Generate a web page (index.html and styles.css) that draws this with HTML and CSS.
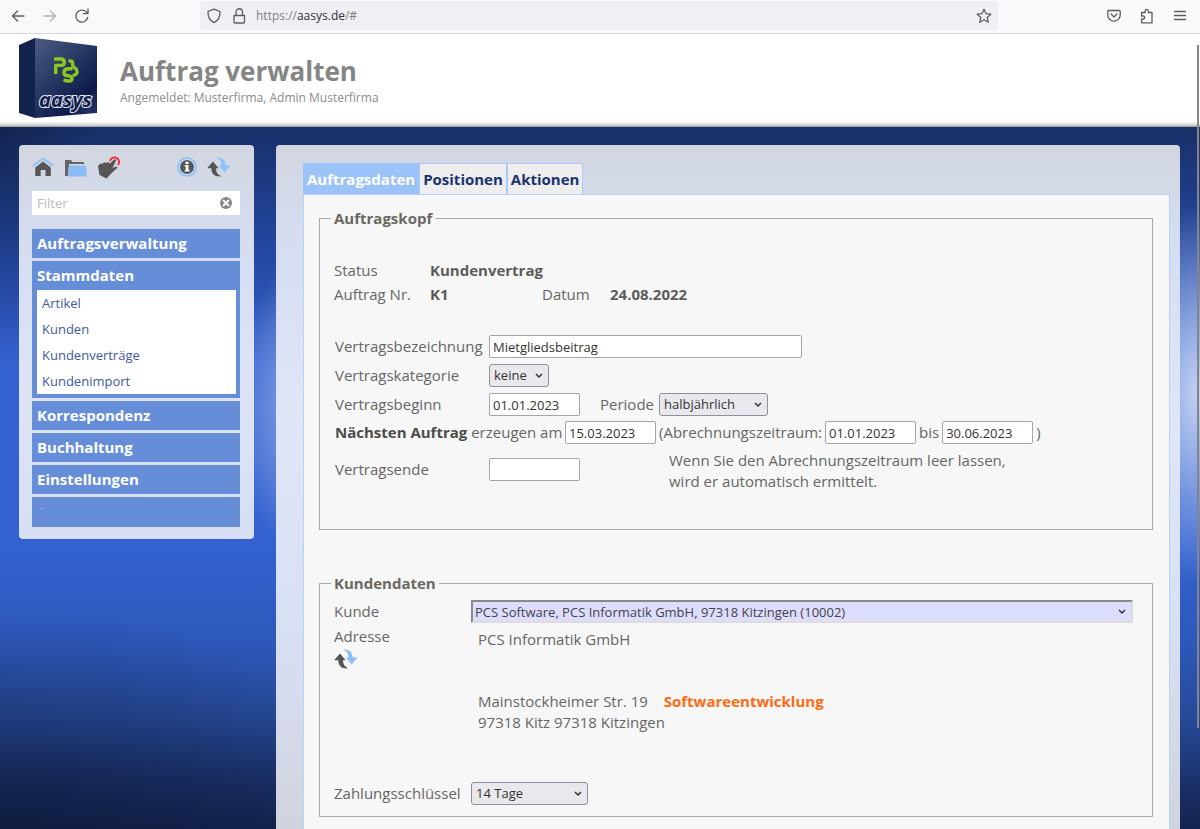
FILE: index.html
```html
<!DOCTYPE html>
<html lang="de">
<head>
<meta charset="utf-8">
<title>Auftrag verwalten</title>
<link rel="stylesheet" href="styles.css">
</head>
<body>
<svg class="defs" width="0" height="0" aria-hidden="true">
  <symbol id="sync" viewBox="0 0 24 20">
    <path fill="#8cc0fb" d="M9 .5C15 0 18.500 3 18.800 8.500H23.500L17.700 15.500 11.800 8.500H14.500C14.600 5 13 2 9 .5Z"/>
    <path fill="#565656" d="M6 4.500 11.700 11.200H9C9 15 10.500 17.500 14.500 19.300 8 20.200 4.300 17 4.300 11.200H0Z"/>
  </symbol>
</svg>
<nav class="browser" aria-label="Browser">
  <div class="browser-nav">
    <button type="button" aria-label="Zurück"><svg width="16" height="16" viewBox="0 0 16 16"><path d="M14 8H2.500M7.500 3 2.500 8l5 5"/></svg></button>
    <button type="button" class="faded" aria-label="Vor"><svg width="16" height="16" viewBox="0 0 16 16"><path d="M2 8h11.500M8.500 3l5 5-5 5"/></svg></button>
    <button type="button" aria-label="Neu laden"><svg width="16" height="16" viewBox="0 0 16 16"><path d="M13.700 9.500A6 6 0 1 1 12 3.800l1.500 1.400M14 1v4.700H9.300"/></svg></button>
  </div>
  <div class="address">
    <svg width="16" height="16" viewBox="0 0 16 16"><path d="M8 1.200 14 3.500C14.200 9 12 12.800 8 14.700 4 12.800 1.800 9 2 3.500Z"/></svg>
    <svg width="16" height="16" viewBox="0 0 16 16"><path d="M3 7.500h10.500V14a1 1 0 0 1-1 1H4a1 1 0 0 1-1-1ZM5 7.500V4a3.200 3.200 0 0 1 6.500 0v3.500"/></svg>
    <span class="url">https://<b>aasys.de</b>/#</span>
    <svg width="16" height="16" viewBox="0 0 16 16"><path d="m8 1.300 2 4.400 4.800.5-3.600 3.200 1 4.800L8 11.800l-4.200 2.400 1-4.800L1.200 6.200 6 5.700Z"/></svg>
  </div>
  <div class="browser-tools">
    <button type="button" aria-label="Pocket"><svg width="16" height="16" viewBox="0 0 16 16"><path d="M2.500 2.500h11a.7.7 0 0 1 .7.700V7A6.200 6.200 0 0 1 1.800 7V3.200a.7.700 0 0 1 .7-.7ZM5 6l3 3 3-3"/></svg></button>
    <button type="button" aria-label="Erweiterungen"><svg width="16" height="16" viewBox="0 0 16 16"><path d="M6.200 4.500V3a1.500 1.500 0 0 1 3.200 0v1.500H13v10.300H2.600V11h1.600a1.500 1.500 0 0 0 0-3H2.600V4.500Z"/></svg></button>
    <button type="button" aria-label="Menü"><svg width="16" height="16" viewBox="0 0 16 16"><path d="M2.500 3.500h11M2.500 7.500h11M2.500 11.500h11"/></svg></button>
  </div>
</nav>
<header class="header">
  <svg class="logo" width="80" height="82" viewBox="0 0 80 82" role="img" aria-label="aasys">
    <defs><linearGradient id="box" x1="0" y1="0" x2=".75" y2="1"><stop offset="0" stop-color="#4c5c80"/><stop offset=".55" stop-color="#22335f"/><stop offset=".85" stop-color="#0d1b4a"/><stop offset="1" stop-color="#1f3060"/></linearGradient></defs>
    <path fill="#12224c" d="M1 8 17 1v80L1 76Z"/>
    <path fill="url(#box)" d="M17 1 79 9v67L17 81Z"/>
    <g fill="none" stroke="#8cc81e" stroke-width="3.400" stroke-linejoin="round">
      <path d="M36 22h7q3.300 0 3.300 3.200t-3.300 3.200H37.700V37"/>
      <path d="M54.500 31.800h-4q-4.500 0-4.500 3.500t4 3.500q4 .2 4 2.900-.2 3.800-8.500 1.500"/>
      <path d="M50.500 24h1.500q2.700 0 2.700 2.700v2q.3 1.500 2.500 2.500 1.800 1 1.800 3.500 0 3.800-4.500 3.500"/>
    </g>
    <text x="21" y="70" class="logo-text">aasys</text>
  </svg>
  <div>
    <h1>Auftrag verwalten</h1>
    <p>Angemeldet: Musterfirma, Admin Musterfirma</p>
  </div>
</header>
<div class="workspace">
  <aside class="sidebar">
    <div class="toolbar">
      <button type="button" aria-label="Start"><svg width="22" height="20" viewBox="0 0 22 20"><path fill="none" stroke="#8cc0fb" stroke-width="2" d="M.7 9 11 1.500 21.300 9"/><path fill="#565656" d="M11 4.500 18.800 10.500V19h-5.300v-6H8.700v6H3.200v-8.500Z"/></svg></button>
      <button type="button" aria-label="Ordner"><svg width="23" height="20" viewBox="0 0 23 20"><path fill="#666" d="M1 3h6l1.500 2H20v2H5l-1 12H1Z"/><path fill="#8cbcf7" d="M5 8.500h17l1 11H4Z"/></svg></button>
      <button type="button" aria-label="Auswahl"><svg width="23" height="23" viewBox="0 0 23 23"><path fill="#565656" d="m1 10 2.500-2.500 2 .3 1.500-1.500 2 .7 2-1 2 1.500L17 3.500q1.500-.8 2.300.5L15.500 12l3.700-1.500 1.300 1.300-5.500 5L9.500 22.500 2.500 19Z"/><path fill="none" stroke="#f22" stroke-width="1.800" d="M13 5a4.600 4.600 0 1 1 8 4"/></svg></button>
      <button type="button" class="push" aria-label="Info"><svg width="20" height="20" viewBox="0 0 20 20"><circle cx="10" cy="10" r="8.900" fill="#d2e6fa" stroke="#8cc0fb" stroke-width="1.800"/><circle cx="10" cy="10" r="7" fill="#55595d"/><path fill="#fff" d="M8.500 4.800h3v2.200h-3ZM7.700 8h3.800v5h1v1.500H7.700V13h1V9.500h-1Z"/></svg></button>
      <button type="button" aria-label="Aktualisieren"><svg width="24" height="20"><use href="#sync"/></svg></button>
    </div>
    <div class="filter">
      <input type="text" placeholder="Filter" aria-label="Filter">
      <button type="button" aria-label="Filter löschen"><svg width="12" height="12" viewBox="0 0 12 12"><circle cx="6" cy="6" r="6" fill="#858585"/><path stroke="#fff" stroke-width="1.800" d="m3 3 6 6m0-6L3 9"/></svg></button>
    </div>
    <nav class="menu" aria-label="Hauptmenü">
      <button type="button">Auftragsverwaltung</button>
      <div class="group">
        <button type="button">Stammdaten</button>
        <div class="links"><a href="#">Artikel</a><a href="#">Kunden</a><a href="#">Kundenverträge</a><a href="#">Kundenimport</a></div>
      </div>
      <button type="button">Korrespondenz</button>
      <button type="button">Buchhaltung</button>
      <button type="button">Einstellungen</button>
      <div class="menu-foot">-</div>
    </nav>
  </aside>
  <main class="main">
    <div class="tabs" role="tablist">
      <button type="button" role="tab" class="active" aria-selected="true">Auftragsdaten</button>
      <button type="button" role="tab" aria-selected="false">Positionen</button>
      <button type="button" role="tab" aria-selected="false">Aktionen</button>
    </div>
    <form class="panel">
      <fieldset class="order">
        <legend>Auftragskopf</legend>
        <dl class="facts">
          <dt>Status</dt><dd class="wide">Kundenvertrag</dd>
          <dt>Auftrag Nr.</dt><dd>K1</dd><dt>Datum</dt><dd>24.08.2022</dd>
        </dl>
        <div class="rows">
          <div class="row"><label class="name" for="bez">Vertragsbezeichnung</label><input class="long" id="bez" type="text" value="Mietgliedsbeitrag"></div>
          <div class="row"><label class="name" for="kat">Vertragskategorie</label><select class="small" id="kat"><option>keine</option></select></div>
          <div class="row"><label class="name" for="beg">Vertragsbeginn</label><input id="beg" type="text" value="01.01.2023"><label class="period" for="per">Periode</label><select class="medium" id="per"><option>halbjährlich</option></select></div>
          <div class="row next"><label class="next-name" for="nxt"><b>Nächsten Auftrag</b> erzeugen am</label><input id="nxt" type="text" value="15.03.2023"><label class="range" for="von">(Abrechnungszeitraum:</label><input id="von" type="text" value="01.01.2023"><label class="range" for="bis">bis</label><input id="bis" type="text" value="30.06.2023"><span class="range">)</span></div>
          <div class="row last"><label class="name" for="end">Vertragsende</label><input id="end" type="text"><p class="hint">Wenn Sie den Abrechnungszeitraum leer lassen,<br>wird er automatisch ermittelt.</p></div>
        </div>
      </fieldset>
      <fieldset class="customer">
        <legend>Kundendaten</legend>
        <div class="crow"><label class="cname" for="kunde">Kunde</label><select class="client" id="kunde"><option>PCS Software, PCS Informatik GmbH, 97318 Kitzingen (10002)</option></select></div>
        <div class="crow address-row">
          <div class="cname">Adresse<button type="button" aria-label="Adresse aktualisieren"><svg width="24" height="20"><use href="#sync"/></svg></button></div>
          <div class="postal">
            <p>PCS Informatik GmbH</p>
            <p class="street">Mainstockheimer Str. 19 <strong>Softwareentwicklung</strong><br>97318 Kitz 97318 Kitzingen</p>
          </div>
        </div>
        <div class="crow"><label class="cname" for="zahl">Zahlungsschlüssel</label><select class="pay" id="zahl"><option>14 Tage</option></select></div>
      </fieldset>
    </form>
  </main>
</div>
<div class="scroll-thumb"></div>
</body>
</html>
```

FILE: styles.css
```css
* { box-sizing: border-box; }
body { margin: 0; height: 100vh; overflow: hidden; display: flex; flex-direction: column; font-family: "Open Sans", "Noto Sans", sans-serif; font-size: 15px; line-height: 21px; color: #666; background: #fff; }
button, input, select { font: inherit; margin: 0; }
button { border: 0; padding: 0; background: none; color: inherit; }
p, h1, dl, dd { margin: 0; }
svg { display: block; flex: none; }
.defs { position: absolute; }

.browser { display: flex; align-items: center; flex: none; height: 34px; padding-bottom: 2px; background: #f9f9fb; border-bottom: 1px solid #d8d8dc; }
.browser svg { fill: none; stroke: #5b5b66; stroke-width: 1.3; stroke-linejoin: round; stroke-linecap: round; }
.browser-nav { display: flex; gap: 16px; width: 200px; padding-left: 10px; }
.browser .faded { opacity: .45; }
.address { display: flex; align-items: center; gap: 9px; flex: 0 1 798px; height: 29px; padding: 0 6px; border-radius: 4px; background: #f0f0f4; }
.url { flex: 1; font-size: 12px; color: #808086; }
.url b { font-weight: 400; color: #303036; }
.browser-tools { display: flex; gap: 17px; margin-left: auto; padding-right: 12px; }

.header { display: flex; flex: none; gap: 22px; height: 93px; padding: 3px 18px; background: linear-gradient(#fff 94%, #d2d2d2 98%, #999); }
.header h1 { padding-top: 17px; font-size: 26px; line-height: 35px; color: #858585; }
.header p { font-size: 12px; line-height: 18px; color: #8c8c8c; }
.logo-text { font: italic bold 20px "Open Sans", sans-serif; fill: #101f4d; stroke: #e4e7ef; stroke-width: 2px; paint-order: stroke; }

.workspace { display: flex; flex: 1; align-items: flex-start; gap: 22px; min-height: 0; padding: 18px 20px 0 19px; background: radial-gradient(ellipse 90px 190px at 100% 38%, #c6d4f4, transparent), radial-gradient(ellipse 100px 150px at 27% 40%, #a4b8ec, transparent), radial-gradient(ellipse 400px 220px at 0 100%, rgba(10, 20, 45, .5), transparent), radial-gradient(ellipse 100px 220px at 0 0, rgba(10, 20, 45, .4), transparent), linear-gradient(#192f68, #2347a0 17%, #3361cf 34%, #3361cf 60%, #2d57b8 74%, #264895 85%, #1b316b 93%, #14244f); }
.sidebar { flex: 0 0 235px; padding: 9px 14px 12px 13px; border-radius: 4px; background: linear-gradient(#d2d6e0, #d6def2 30%, #dee4f5 60%, #d6dff3); }
.toolbar { display: flex; align-items: center; gap: 10px; height: 26px; padding-right: 9px; }
.toolbar .push { margin-left: auto; }
.filter { display: flex; align-items: center; height: 24px; margin: 11px 0 14px; padding-right: 8px; background: #fff; }
.filter input { flex: 1; min-width: 0; height: 24px; padding: 0 5px; border: 0; background: none; font-size: 13px; }
.filter input::placeholder { color: #bdbdbd; }
.menu { display: grid; gap: 3px; }
.menu button { display: block; width: 100%; height: 29px; padding: 0 5px; text-align: left; font-weight: 700; color: #fff; background: #668dd8; }
.group { padding-bottom: 4px; background: #668dd8; }
.links { display: grid; margin: 0 4px 0 5px; background: #fff; }
.links a { padding: 0 5px; line-height: 26px; font-size: 13px; color: #405b9e; text-decoration: none; }
.menu-foot { height: 30px; padding: 0 8px; font-size: 10px; color: #a9c0ec; background: #668dd8; }

.main { display: flex; flex: 1; flex-direction: column; align-self: stretch; min-width: 0; padding: 18px 10px 0 27px; border-radius: 4px 4px 0 0; background: linear-gradient(#d2d6e0, #d5def2 16%, #e0e6f6 40%, #d8e0f4 70%, #d0d4de); }
.tabs { display: flex; flex: none; }
.tabs button { height: 31px; padding: 0 3px; font-weight: 700; color: #1a3370; background: #eee; border: 1px solid #adc9f7; border-bottom: 0; }
.tabs .active { color: #fff; background: #9bc2f9; border-color: #9bc2f9; }
.panel { flex: 1; padding: 13px 16px 0 15px; background: #f7f7f7; border: 1px solid #b9d2fa; border-bottom: 0; }
fieldset { min-width: 0; margin: 0; padding: 0 14px; border: 1px solid #aaa; }
legend { margin-left: -3px; padding: 0 3px; font-weight: 700; color: #6b6862; }
.order { height: 322px; }
.customer { height: 244px; margin-top: 43px; padding-top: 6px; }

.facts { display: grid; grid-template-columns: 96px 112px 68px 1fr; row-gap: 3px; padding-top: 31px; }
.facts dd { font-weight: 700; color: #5c5c5c; }
.facts .wide { grid-column: span 3; }
.rows { padding: 27px 0 0 1px; }
.row { display: flex; align-items: center; height: 29px; }
.name { flex: 0 0 154px; }
input, select { color: #333; }
.row input { width: 91px; height: 23px; padding: 0 3px; font-size: 13px; background: #fff; border: 1px solid #a4a4ae; border-radius: 2px; }
.row .long { width: 313px; }
.row .next-name { flex: 0 0 230px; }
.row .range { padding: 0 3px; }
b { color: #4c4c4c; }
.period { padding: 0 5px 0 20px; }
select { height: 23px; padding: 0 4px; font-size: 13px; appearance: none; border: 1px solid #8f8f9d; border-radius: 3px; background: #e9e9ed url("data:image/svg+xml,%3Csvg xmlns='http://www.w3.org/2000/svg' width='8' height='6'%3E%3Cpath d='m1 1 3 3 3-3' fill='none' stroke='%23333' stroke-width='1.500'/%3E%3C/svg%3E") no-repeat right 5px center; }
.small { width: 60px; }
.medium { width: 109px; }
.next { height: 27px; }
.last { height: 46px; }
.hint { align-self: flex-end; margin-left: 89px; }

.crow { display: flex; align-items: center; }
.cname { flex: 0 0 137px; }
.client { flex: 0 1 662px; min-width: 0; padding: 0 2px; color: #444; background-color: #ddf; border: 2px inset #ddd; border-radius: 0; }
.address-row { align-items: flex-start; padding-top: 3px; height: 159px; }
.address-row button { display: block; margin-top: 2px; }
.postal { padding: 3px 7px; }
.street { padding-top: 41px; }
.street strong { margin-left: 12px; color: #ff6a13; }
.pay { width: 117px; }
.scroll-thumb { position: absolute; top: 45px; right: 1px; width: 2px; height: 683px; background: #858585; }
```
